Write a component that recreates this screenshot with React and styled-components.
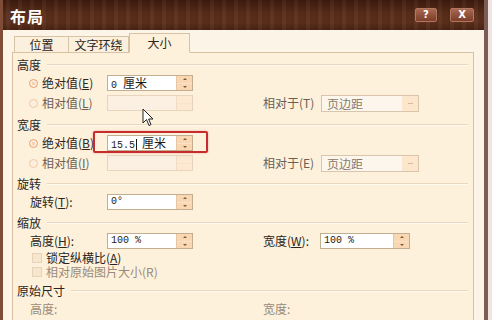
import React from "react";
import styled, { createGlobalStyle } from "styled-components";

const GlobalStyle = createGlobalStyle`
  html, body {
    margin: 0;
    padding: 0;
    background: #efe4e0;
    overflow: hidden;
  }
  body {
    font-family: "Noto Sans CJK SC", "DejaVu Sans", sans-serif;
    font-size: 12px;
    line-height: 14px;
    color: #2b2520;
  }
`;

const Window = styled.div`
  width: 481px;
  height: 320px;
  border-left: 3px solid #7e4c37;
  border-right: 4px solid #7b5c57;
  display: flex;
  flex-direction: column;
  background: #fcf4e6;
  overflow: hidden;
`;

const TitleBar = styled.div`
  height: 30px;
  flex: none;
  display: flex;
  align-items: center;
  padding: 0 10px 0 7px;
  background:
    repeating-linear-gradient(90deg, rgba(0,0,0,0.08) 0 3px, rgba(255,255,255,0.03) 3px 7px, rgba(0,0,0,0.05) 7px 12px),
    linear-gradient(180deg, #3e1c0f 0%, #5a2e1a 45%, #5e311c 75%, #4b2414 100%);
`;

const Title = styled.div`
  flex: 1;
  color: #fff;
  font-size: 16px;
  line-height: 20px;
  font-weight: bold;
  letter-spacing: 1px;
  padding-top: 2px;
`;

const CapButton = styled.div`
  width: ${p => p.w}px;
  height: 12px;
  margin-left: ${p => p.ml || 0}px;
  border: 1px solid #b07860;
  border-radius: 2px;
  background: linear-gradient(180deg, #a86850, #7c3e2a);
  color: #fff;
  font-family: "DejaVu Sans", sans-serif;
  font-weight: bold;
  font-size: 10px;
  line-height: 12px;
  text-align: center;
`;

const Body = styled.div`
  flex: 1;
  padding: 3px 10px 0 9px;
  display: flex;
  flex-direction: column;
`;

const TabStrip = styled.div`
  display: flex;
  align-items: flex-end;
  height: 20px;
  padding-left: 2px;
  position: relative;
  z-index: 1;
  margin-bottom: -1px;
`;

const Tab = styled.div`
  width: ${p => p.w}px;
  height: ${p => (p.active ? 20 : 17)}px;
  box-sizing: border-box;
  border: 1px solid #d8c2a4;
  border-bottom: ${p => (p.active ? "1px solid #fdf1dc" : "1px solid #d8c2a4")};
  border-left: ${p => (p.first || p.active ? "1px solid #d8c2a4" : "none")};
  background: ${p => (p.active ? "#fdf1dc" : "#fbefdd")};
  text-align: center;
  line-height: ${p => (p.active ? 18 : 15)}px;
  color: #2b2520;
`;

const Panel = styled.div`
  flex: 1;
  border: 1px solid #d8c2a4;
  border-bottom: none;
  background: #fdf1dc;
  padding: 3px 5px 0 4px;
`;

const Group = styled.div`
  margin-top: ${p => p.mt || 0}px;
`;

const Header = styled.div`
  height: 17px;
  display: flex;
  align-items: center;
  gap: 6px;
  color: #2b2520;
  &::after {
    content: "";
    flex: 1;
    height: 1px;
    background: #e9d7be;
    box-shadow: 0 1px 0 #fffaf0;
  }
`;

const Row = styled.div`
  height: ${p => p.h || 20}px;
  display: flex;
  align-items: center;
  padding-left: 12px;
`;

const LabelCell = styled.div`
  width: ${p => p.w}px;
  flex: none;
  display: flex;
  align-items: center;
  color: ${p => (p.muted ? "#6b5f55" : p.faint ? "#9a8a78" : "#2b2520")};
  white-space: nowrap;
  padding-left: ${p => p.pl || 0}px;
  box-sizing: border-box;
`;

const Radio = styled.span`
  width: 9px;
  height: 9px;
  border-radius: 50%;
  box-sizing: border-box;
  margin-right: 4px;
  border: 1px solid ${p => (p.on ? "#e8a070" : "#f0c8a4")};
  background: ${p =>
    p.on
      ? "radial-gradient(circle, #f7d2b0 0 35%, #fbeede 36%)"
      : "#fcefe0"};
`;

const Check = styled.span`
  width: 10px;
  height: 10px;
  box-sizing: border-box;
  margin: 0 4px 0 3px;
  border: 1px solid #e6d2b6;
  background: #f7e6ce;
`;

const CheckLabel = styled.span`
  color: ${p => (p.faint ? "#9a8a78" : "#2b2520")};
`;

const Spacer = styled.div`
  width: ${p => p.w}px;
  flex: none;
`;

const SpinBox = styled.div`
  width: ${p => p.w}px;
  height: 16px;
  flex: none;
  box-sizing: border-box;
  display: flex;
  position: relative;
  border: 1px solid ${p => (p.disabled ? "#e6d5bc" : "#c4ae90")};
  background: ${p => (p.disabled ? "#fbf0e2" : "#fff")};
`;

const SpinText = styled.div`
  flex: 1;
  padding-left: 3px;
  font-family: "Liberation Mono", "Noto Sans CJK SC", monospace;
  font-size: 10px;
  line-height: 14px;
  color: #1e1a16;
  white-space: pre;
`;

const Cjk = styled.span`
  font-family: "Noto Sans CJK SC", sans-serif;
  font-size: 12px;
  margin-left: ${p => p.ml || 0}px;
`;

const Caret = styled.span`
  display: inline-block;
  width: 1px;
  height: 11px;
  margin-left: 1px;
  vertical-align: -2px;
  background: #1e1a16;
`;

const Spin = styled.div`
  width: 15px;
  display: flex;
  flex-direction: column;
  border-left: 1px solid ${p => (p.disabled ? "#f0dcc2" : "#e9c7a0")};
  background: ${p => (p.disabled ? "#fde9d2" : "#f9d7b2")};
`;

const SpinHalf = styled.div`
  flex: 1;
  display: flex;
  align-items: center;
  justify-content: center;
  & + & {
    border-top: 1px solid ${p => (p.disabled ? "#f7e2ca" : "#f1c69c")};
  }
  &::before {
    content: "";
    display: ${p => (p.disabled ? "none" : "block")};
    width: 0;
    height: 0;
    border-left: 2px solid transparent;
    border-right: 2px solid transparent;
    ${p => (p.down ? "border-top: 2px solid #7a5a40;" : "border-bottom: 2px solid #7a5a40;")}
  }
`;

const Select = styled.div`
  width: 98px;
  height: 17px;
  box-sizing: border-box;
  display: flex;
  border: 1px solid #d8c5ab;
  background: #fdf6ec;
`;

const SelectText = styled.div`
  flex: 1;
  padding-left: 5px;
  line-height: 15px;
  color: #8a7a6a;
`;

const SelectBtn = styled.div`
  width: 16px;
  background: #fce6cc;
  display: flex;
  align-items: center;
  justify-content: center;
  &::before {
    content: "";
    width: 5px;
    height: 1px;
    background: #e0b890;
  }
`;

const Highlight = styled.div`
  position: absolute;
  left: -15px;
  right: -16px;
  top: -5px;
  bottom: -3px;
  border: 2px solid #c72c2c;
  border-radius: 2px;
  box-shadow: 0 0 2px rgba(200, 40, 40, 0.4);
  pointer-events: none;
`;

const Cursor = styled.svg`
  position: absolute;
  left: 142px;
  top: 108px;
`;

const Key = styled.u``;

const Spinner = ({ w = 86, value, disabled, children }) => (
  <SpinBox w={w} disabled={disabled}>
    <SpinText>{value}</SpinText>
    <Spin disabled={disabled}>
      <SpinHalf disabled={disabled} />
      <SpinHalf disabled={disabled} down />
    </Spin>
    {children}
  </SpinBox>
);

const Dropdown = () => (
  <Select>
    <SelectText>页边距</SelectText>
    <SelectBtn />
  </Select>
);

export default function App() {
  return (
    <>
      <GlobalStyle />
      <Window>
        <TitleBar>
          <Title>布局</Title>
          <CapButton w={20}>?</CapButton>
          <CapButton w={22} ml={13}>X</CapButton>
        </TitleBar>
        <Body>
          <TabStrip>
            <Tab w={55} first>位置</Tab>
            <Tab w={60}>文字环绕</Tab>
            <Tab w={61} active>大小</Tab>
          </TabStrip>
          <Panel>
            <Group>
              <Header>高度</Header>
              <Row>
                <LabelCell w={78}>
                  <Radio on />
                  绝对值(<Key>E</Key>)
                </LabelCell>
                <Spinner value={<>0<Cjk ml={6}>厘米</Cjk></>} />
              </Row>
              <Row>
                <LabelCell w={78} muted>
                  <Radio />
                  相对值(<Key>L</Key>)
                </LabelCell>
                <Spinner disabled />
                <Spacer w={70} />
                <LabelCell w={58} muted>相对于(T)</LabelCell>
                <Dropdown />
              </Row>
            </Group>

            <Group mt={3}>
              <Header>宽度</Header>
              <Row>
                <LabelCell w={78}>
                  <Radio on />
                  绝对值(<Key>B</Key>)
                </LabelCell>
                <Spinner value={<>15.5<Caret /><Cjk ml={5}>厘米</Cjk></>}>
                  <Highlight />
                </Spinner>
              </Row>
              <Row>
                <LabelCell w={78} muted>
                  <Radio />
                  相对值(<Key>I</Key>)
                </LabelCell>
                <Spinner disabled />
                <Spacer w={70} />
                <LabelCell w={58} muted>相对于(E)</LabelCell>
                <Dropdown />
              </Row>
            </Group>

            <Group mt={2}>
              <Header>旋转</Header>
              <Row>
                <LabelCell w={78} pl={1}>
                  旋转(<Key>T</Key>):
                </LabelCell>
                <Spinner value="0°" />
              </Row>
            </Group>

            <Group mt={2}>
              <Header>缩放</Header>
              <Row>
                <LabelCell w={78} pl={1}>
                  高度(<Key>H</Key>):
                </LabelCell>
                <Spinner value="100 %" />
                <Spacer w={70} />
                <LabelCell w={57}>宽度(<Key>W</Key>):</LabelCell>
                <Spinner w={90} value="100 %" />
              </Row>
              <Row h={14}>
                <Check />
                <CheckLabel>锁定纵横比(<Key>A</Key>)</CheckLabel>
              </Row>
              <Row h={14}>
                <Check />
                <CheckLabel faint>相对原始图片大小(R)</CheckLabel>
              </Row>
            </Group>

            <Group mt={3}>
              <Header>原始尺寸</Header>
              <Row>
                <LabelCell w={78} pl={1} faint>高度:</LabelCell>
                <Spacer w={156} />
                <LabelCell w={58} faint>宽度:</LabelCell>
              </Row>
            </Group>
          </Panel>
        </Body>
      </Window>
      <Cursor width="12" height="19" viewBox="0 0 12 19">
        <path
          d="M1 1 L1 15 L4.5 11.5 L7 17.5 L9 16.6 L6.6 11 L11 11 Z"
          fill="#fff"
          stroke="#222"
          strokeWidth="1"
          strokeLinejoin="round"
        />
      </Cursor>
    </>
  );
}
